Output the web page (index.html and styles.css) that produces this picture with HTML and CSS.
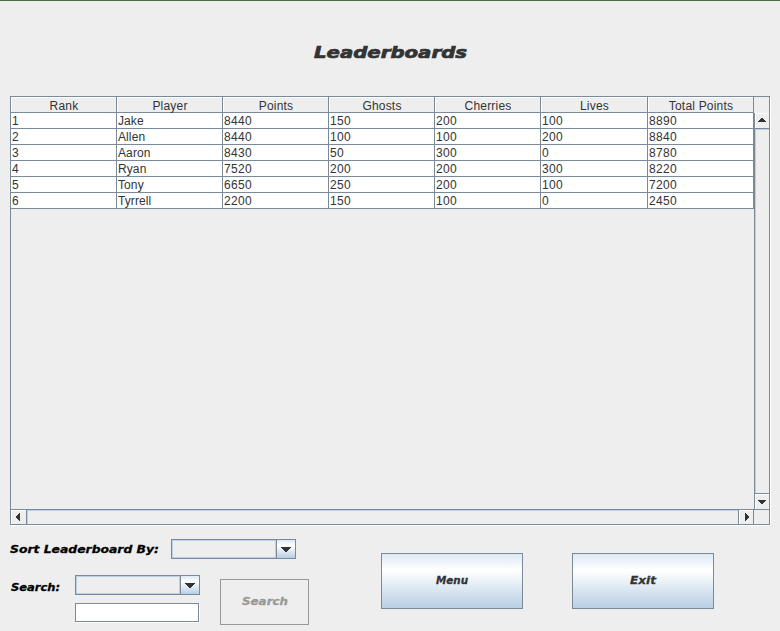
FILE: index.html
```html
<!DOCTYPE html>
<html lang="en">
<head>
<meta charset="utf-8">
<title>Leaderboards</title>
<link rel="stylesheet" href="styles.css">
</head>
<body>
<main class="window">
  <h1 class="title"><svg width="160" height="22"><text x="2" y="16" textLength="153" lengthAdjust="spacingAndGlyphs">Leaderboards</text></svg></h1>
  <section class="pane">
    <div class="view">
      <table class="scores">
        <colgroup><col class="c"><col class="c"><col class="c"><col class="c"><col class="c"><col class="wide"><col class="c"></colgroup>
        <thead><tr><th>Rank</th><th>Player</th><th>Points</th><th>Ghosts</th><th>Cherries</th><th>Lives</th><th>Total Points</th></tr></thead>
        <tbody>
          <tr><td>1</td><td>Jake</td><td>8440</td><td>150</td><td>200</td><td>100</td><td>8890</td></tr>
          <tr><td>2</td><td>Allen</td><td>8440</td><td>100</td><td>100</td><td>200</td><td>8840</td></tr>
          <tr><td>3</td><td>Aaron</td><td>8430</td><td>50</td><td>300</td><td>0</td><td>8780</td></tr>
          <tr><td>4</td><td>Ryan</td><td>7520</td><td>200</td><td>200</td><td>300</td><td>8220</td></tr>
          <tr><td>5</td><td>Tony</td><td>6650</td><td>250</td><td>200</td><td>100</td><td>7200</td></tr>
          <tr><td>6</td><td>Tyrrell</td><td>2200</td><td>150</td><td>100</td><td>0</td><td>2450</td></tr>
        </tbody>
      </table>
    </div>
    <div class="vside">
      <div class="corner"></div>
      <div class="vbar">
        <div class="step up"><svg width="14" height="14" shape-rendering="crispEdges"><path d="M6 5h2v1h1v1h1v1h1v1H3V8h1V7h1V6h1z"/></svg></div>
        <div class="vtrack"></div>
        <div class="step down"><svg width="14" height="14" shape-rendering="crispEdges"><path d="M3 6h8v1h-1v1H9v1H8v1H6V9H5V8H4V7H3z"/></svg></div>
      </div>
    </div>
    <div class="hbar">
      <div class="step left"><svg width="15" height="14" shape-rendering="crispEdges"><path d="M9 3v8H8v-1H7V9H6V8H5V6h1V5h1V4h1V3z"/></svg></div>
      <div class="htrack"></div>
      <div class="step right"><svg width="14" height="14" shape-rendering="crispEdges"><path d="M6 3h1v1h1v1h1v1h1v2H9v1H8v1H7v1H6z"/></svg></div>
    </div>
    <div class="end"></div>
  </section>
  <section class="controls">
    <div class="filters">
      <div class="sort">
        <label><svg width="161" height="18"><text x="0" y="13" textLength="149" lengthAdjust="spacingAndGlyphs">Sort Leaderboard By:</text></svg></label>
        <div class="combo"><span class="value"></span><span class="drop"><svg width="11" height="5" shape-rendering="crispEdges"><path d="M0 0h10v1H9v1H8v1H7v1H6v1H4V4H3V3H2V2H1V1H0z"/></svg></span></div>
      </div>
      <div class="search">
        <label><svg width="64" height="18"><text x="1" y="13" textLength="49" lengthAdjust="spacingAndGlyphs">Search:</text></svg></label>
        <div class="fields">
          <div class="combo"><span class="value"></span><span class="drop"><svg width="11" height="5" shape-rendering="crispEdges"><path d="M0 0h10v1H9v1H8v1H7v1H6v1H4V4H3V3H2V2H1V1H0z"/></svg></span></div>
          <input class="query" type="text" aria-label="Search">
        </div>
        <button class="find" disabled><svg width="52" height="18"><text x="3" y="12" textLength="46" lengthAdjust="spacingAndGlyphs">Search</text></svg></button>
      </div>
    </div>
    <button class="action"><svg width="44" height="18"><text x="6" y="12" textLength="32" lengthAdjust="spacingAndGlyphs">Menu</text></svg></button>
    <button class="action exit"><svg width="38" height="18"><text x="6" y="12" textLength="26" lengthAdjust="spacingAndGlyphs">Exit</text></svg></button>
  </section>
</main>
</body>
</html>
```
FILE: styles.css
```css
* { box-sizing: border-box; }
body { margin: 0; background: #eee; color: #333; font: 12px "Liberation Sans", Arial, sans-serif; }
svg { display: block; fill: #333; }
svg text { font: italic bold 11px "DejaVu Sans", sans-serif; stroke: #333; stroke-width: .3px; }
.window { width: 780px; height: 631px; overflow: hidden; border-top: 1px solid #4b6d43; padding: 0 10px; }
.title { margin: 0; height: 95px; padding: 41px 0 0 302px; }
.title svg text { font-size: 15.5px; stroke-width: .7px; }
.pane { display: grid; grid-template-columns: 743px 15px; grid-template-rows: 412px 15px; width: 760px; height: 429px; border: 1px solid #7a8a99; box-shadow: 1px 1px 0 #fff; }
.view { overflow: hidden; }
.scores { width: 743px; table-layout: fixed; border-collapse: separate; border-spacing: 0; }
.c { width: 106px; }
.wide { width: 107px; }
.scores th, .scores td { height: 16px; padding: 1px 0 0 1px; border-right: 1px solid #7a8a99; border-bottom: 1px solid #7a8a99; line-height: 14px; font-weight: normal; letter-spacing: .33px; white-space: nowrap; }
.scores th { text-align: center; padding: 3px 0 0 1px; line-height: 12px; letter-spacing: .2px; box-shadow: inset 1px 1px 0 #fff; }
.scores td { background: #fff; }
.scores td:nth-child(2) { letter-spacing: .1px; }
.vside { display: flex; flex-direction: column; }
.corner { height: 16px; }
.vbar { flex: 1; display: flex; flex-direction: column; border-left: 1px solid #7a8a99; }
.step { background: #eee; box-shadow: inset 1px 1px 0 #fff; }
.up { height: 16px; border-bottom: 1px solid #7a8a99; }
.down { height: 16px; border-top: 1px solid #7a8a99; }
.vtrack { flex: 1; box-shadow: inset 1px 1px 0 #b8cfe5; }
.hbar { display: flex; border-top: 1px solid #7a8a99; }
.left { width: 16px; border-right: 1px solid #7a8a99; }
.right { width: 16px; border-left: 1px solid #7a8a99; border-right: 1px solid #7a8a99; }
.htrack { flex: 1; box-shadow: inset 1px 1px 0 #b8cfe5; }
.end { border-top: 1px solid #7a8a99; }
.controls { display: flex; align-items: flex-start; padding-top: 14px; }
.filters { width: 371px; }
.filters label svg { fill: #000; }
.filters label text { stroke: #000; }
.sort { display: flex; }
.sort label { width: 161px; padding-top: 1px; }
.combo { display: flex; width: 125px; height: 20px; border: 1px solid #7a8a99; }
.value { flex: 1; border: 1px solid #b8cfe5; }
.drop { width: 19px; border-left: 1px solid #7a8a99; display: flex; align-items: center; justify-content: center; background: linear-gradient(#dde8f3, #fff 30%, #b8cfe5); }
.search { display: flex; margin-top: 16px; }
.search label { width: 65px; padding-top: 3px; }
.fields { width: 145px; }
.query { display: block; width: 124px; height: 19px; margin: 8px 0 0; padding: 0 3px; border: 1px solid #7a8a99; background: #fff; outline: 0; box-shadow: 1px 1px 0 #fff; }
button { display: flex; align-items: center; justify-content: center; padding: 0; border: 1px solid #7a8a99; }
.find { width: 89px; height: 46px; margin-top: 4px; background: #eee; border-color: #999; }
.find svg { fill: #999; }
.find text { stroke: #999; }
.action { width: 142px; height: 56px; margin-top: 14px; background: linear-gradient(#dde8f3, #fff 30%, #b8cfe5); }
.exit { margin-left: 49px; }
```
